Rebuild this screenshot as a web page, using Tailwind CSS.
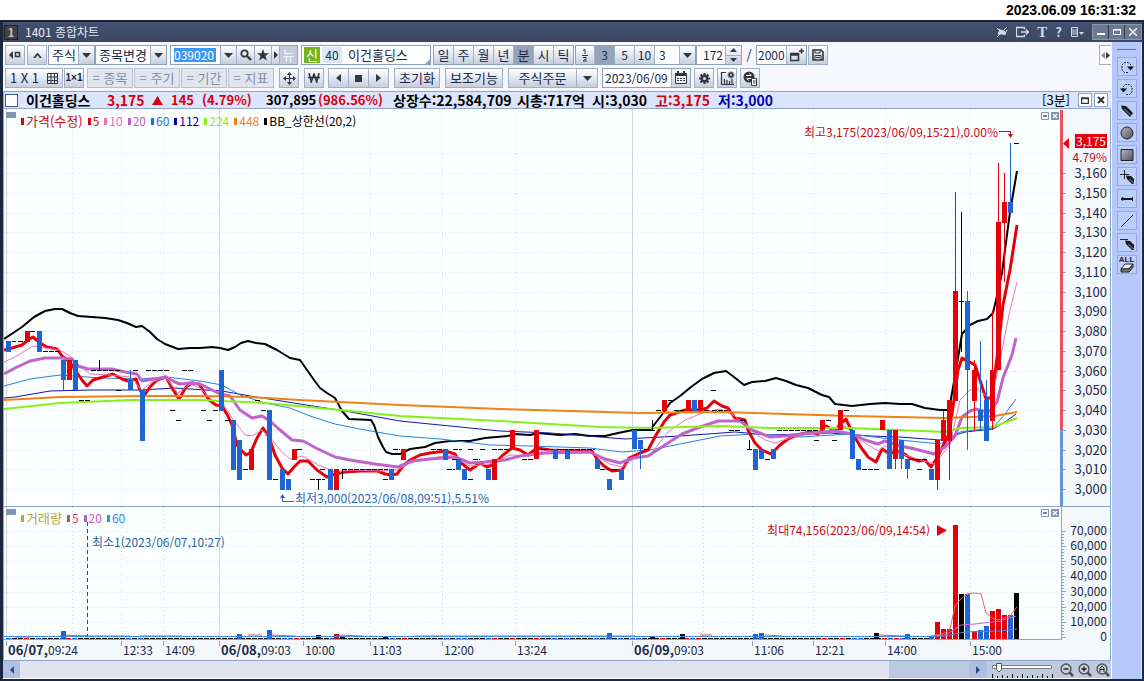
<!DOCTYPE html>
<html lang="ko">
<head>
<meta charset="utf-8">
<title>1401 종합차트</title>
<script src="https://cdn.jsdelivr.net/npm/@tailwindcss/browser@4"></script>
</head>
<body class="min-h-screen bg-white flex flex-col text-[13px] leading-4 text-[#20284a] font-['Noto_Sans_CJK_KR',sans-serif] overflow-x-hidden">
<svg class="hidden">
  <symbol id="down" viewBox="0 0 9 5"><path d="M0 0h9L4.500 5z" fill="#33373f"/></symbol>
  <symbol id="cal" viewBox="0 0 14 14"><path d="M1.500 2.500h11v10h-11z" fill="#eef1f6" stroke="#33373f"/><path d="M1 2h12v3H1zM3 0h2v3H3zM9 0h2v3H9z" fill="#33373f"/><path d="M3 7h2v1H3zm3 0h2v1H6zm3 0h2v1H9zM3 9h2v1H3zm3 0h2v1H6zm3 0h2v1H9z" fill="#33373f"/></symbol>
  <symbol id="gear" viewBox="0 0 14 14"><g stroke="#33373f" stroke-width="2.400"><path d="M7 1v12M1 7h12M2.800 2.800l8.400 8.400M11.200 2.800l-8.400 8.400"/></g><circle cx="7" cy="7" r="4" fill="#33373f"/><circle cx="7" cy="7" r="1.700" fill="#d6dbe5"/></symbol>
  <symbol id="pen" viewBox="0 0 14 14"><path d="M1 1.500l5 .5 7 7-3 4-8-8z" fill="#17181d"/><path d="M4.500 5l6 6" stroke="#9aa0b0"/></symbol>
  <symbol id="minbox" viewBox="0 0 8 8"><path d="M.5.5h7v7h-7z" fill="#fff" stroke="#8095b4"/><path d="M2 3h4v2H2z" fill="#6f86a8"/></symbol>
  <symbol id="xbox" viewBox="0 0 8 8"><path d="M0 0h8v8H0z" fill="#8095b4"/><path d="M2 2l4 4M6 2l-4 4" stroke="#fff" stroke-width="1.300"/></symbol>
</svg>

<header class="h-5 shrink-0 flex justify-end items-center pr-2 text-[14px] font-bold text-black font-['Liberation_Sans',sans-serif]"><time>2023.06.09 16:31:32</time></header>

<div class="flex-1 flex flex-col bg-[#1c2740] pl-[3px] pr-[2px] pb-[2px]">
  <div class="h-[22px] shrink-0 flex items-center bg-linear-to-b from-[#43506f] to-[#3b4762] border-t-2 border-[#1c2333] text-[#e8ecf5]">
    <span class="w-[14px] h-[15px] ml-px bg-[#45413f] border border-[#20222a] text-center text-[11px] leading-[13px] font-bold text-[#c9c4bd]">1</span>
    <h1 class="ml-[7px] grow text-[12px]">1401 종합차트</h1>
    <div class="flex items-center gap-2 text-[#d3d8e4]">
      <button aria-label="고정"><svg class="w-3 h-3" viewBox="0 0 12 12" stroke="currentColor" fill="none"><path d="M1 2l2 2M3 3l3 3M1 11l3-3M11 1L8 4M11 4L8 9"/><path d="M3 4l5 5M2 8l2-4 4 1 2 3z" fill="currentColor"/></svg></button>
      <button aria-label="내보내기"><svg class="w-[13px] h-3" viewBox="0 0 13 12" stroke="currentColor" fill="none" stroke-width="1.300"><path d="M8.500 3.500v-2h-8v9h8v-2M5 6h7M10 3.500L12.500 6 10 8.500"/></svg></button>
      <button class="font-bold font-['Liberation_Serif',serif] text-[15px]" aria-label="글꼴">T</button>
      <button class="font-bold" aria-label="도움말">?</button>
      <button aria-label="메뉴"><svg class="w-[14px] h-3" viewBox="0 0 14 12" fill="none" stroke="currentColor"><path d="M1.500 1.500h6v9h-6zM2 4h5M2 6h5M2 8h5"/><path d="M9 6h5l-2.500 3z" fill="currentColor" stroke="none"/></svg></button>
    </div>
    <div class="flex ml-2 h-4 bg-[#6d7891] border border-[#8d97ab] divide-x divide-[#2f3a53]">
      <button class="w-4 grid place-items-center" aria-label="최소화"><svg class="w-2 h-2" viewBox="0 0 8 8"><path d="M0 5h8v2H0z" fill="#fff"/></svg></button>
      <button class="w-4 grid place-items-center" aria-label="최대화"><svg class="w-2 h-2" viewBox="0 0 8 8"><path d="M.5 1.500h7v5h-7zM0 2h8" fill="none" stroke="#fff"/></svg></button>
      <button class="w-4 grid place-items-center" aria-label="닫기"><svg class="w-2 h-2" viewBox="0 0 8 8"><path d="M0 0l8 8M8 0L0 8" stroke="#fff" stroke-width="1.300"/></svg></button>
    </div>
  </div>

  <div class="flex-1 flex">
    <main class="flex-1 min-w-0 flex flex-col bg-[#f7f8fd] pr-px border-b border-white">
      <div class="flex flex-col gap-[3px] pt-[3px] pb-[3px] pl-[2px] [&_button]:shrink-0 [&_button]:grid [&_button]:place-items-center">
        <div class="flex h-5">
          <div class="flex gap-[2px]">
            <button class="w-5 border border-[#a3afc6] bg-linear-to-b from-white to-[#c6cfdf]" aria-label="접기"><svg class="w-3 h-2" viewBox="0 0 12 8"><path d="M4 0v8L0 4z" fill="#33373f"/><path d="M6.500 1.500h4v4h-4z" fill="none" stroke="#33373f" stroke-width="1.500"/></svg></button>
            <button class="w-5 border border-[#a3afc6] bg-linear-to-b from-white to-[#c6cfdf]" aria-label="위로"><svg class="w-[9px] h-[5px]" viewBox="0 0 9 5"><path d="M1 5l3.500-4L8 5" fill="none" stroke="#33373f" stroke-width="1.800"/></svg></button>
          </div>
          <label class="relative flex ml-px w-[47px] border border-[#8fa0bd] bg-white"><select aria-label="시장" class="appearance-none w-full pl-[3px] outline-none"><option>주식</option></select><span class="absolute right-0 inset-y-0 w-4 grid place-items-center border-l border-[#a3afc6] bg-linear-to-b from-white to-[#c6cfdf] pointer-events-none"><svg class="w-[9px] h-[5px]"><use href="#down"/></svg></span></label>
          <label class="relative flex w-[72px] border border-[#8fa0bd] bg-white"><select aria-label="종목변경" class="appearance-none w-full pl-[3px] outline-none"><option>종목변경</option></select><span class="absolute right-0 inset-y-0 w-4 grid place-items-center border-l border-[#a3afc6] bg-linear-to-b from-white to-[#c6cfdf] pointer-events-none"><svg class="w-[9px] h-[5px]"><use href="#down"/></svg></span></label>
          <div class="flex ml-[3px] border border-[#8fa0bd] bg-white divide-x divide-[#a3afc6]">
            <label class="w-[50px] flex items-center pl-[3px]"><span class="sr-only">종목코드</span><input value="039020" class="w-[42px] h-[14px] bg-[#3c96f4] text-[12px] text-white outline-none"></label>
            <button class="w-4 bg-linear-to-b from-white to-[#c6cfdf]" aria-label="코드 목록"><svg class="w-[9px] h-[5px]"><use href="#down"/></svg></button>
            <button class="w-[18px] bg-linear-to-b from-white to-[#c6cfdf]" aria-label="검색"><svg class="w-3 h-3" viewBox="0 0 12 12"><circle cx="4.500" cy="4.500" r="3.200" fill="none" stroke="#33373f" stroke-width="1.800"/><path d="M7 7l4 4" stroke="#33373f" stroke-width="2.400"/></svg></button>
            <button class="w-[17px] bg-linear-to-b from-white to-[#c6cfdf]" aria-label="관심"><svg class="w-3 h-3" viewBox="0 0 12 12"><path d="M6 0l1.600 4.200H12L8.500 7l1.300 4.600L6 9l-3.800 2.600L3.500 7 0 4.200h4.400z" fill="#33373f"/></svg></button>
            <button class="w-2 bg-linear-to-b from-white to-[#c6cfdf]" aria-label="더보기"><svg class="w-1 h-2" viewBox="0 0 4 8"><path d="M0 0l4 4-4 4z" fill="#33373f"/></svg></button>
            <button class="w-[17px] bg-[#c3cad9] text-white">뉴</button>
          </div>
          <div class="relative flex items-center ml-[3px] w-[130px] border border-[#8fa0bd] bg-white pl-[2px]">
            <span class="w-4 h-4 bg-[#76b41c] text-white text-center">신</span><span class="w-5 h-4 ml-[2px] bg-[#dce8fa] text-center text-[12px]">40</span><span class="ml-[6px]">이건홀딩스</span>
            <svg class="absolute right-0 bottom-0 w-[5px] h-[5px]" viewBox="0 0 5 5"><path d="M5 0v5H0z" fill="#8fa0bd"/></svg>
          </div>
          <div class="flex ml-[2px] w-[141px] border border-[#8fa0bd] divide-x divide-[#a3afc6] bg-linear-to-b from-white to-[#c6cfdf] [&>button]:flex-1">
            <button>일</button><button>주</button><button>월</button><button>년</button><button class="bg-[#98a3ba]">분</button><button>시</button><button>틱</button>
          </div>
          <div class="flex ml-px w-[121px] border border-[#8fa0bd] divide-x divide-[#a3afc6] bg-linear-to-b from-white to-[#c6cfdf] text-[12px]">
            <button class="w-[19px]" aria-label="2분의 1"><svg class="w-2 h-[14px]" viewBox="0 0 8 14" fill="none" stroke="#33373f"><path d="M2 2.500l2-1V6M1 7.500h6M2 9.500h3v1.500l-3 2h4"/></svg></button><button class="w-5 bg-[#98a3ba]">3</button><button class="w-5">5</button><button class="w-5">10</button>
            <input aria-label="분 간격" value="3" class="w-[25px] bg-white pl-1 outline-none min-w-0 flex-1"><button class="w-[15px]" aria-label="간격 목록"><svg class="w-[9px] h-[5px]"><use href="#down"/></svg></button>
          </div>
          <div class="flex w-[46px] border border-[#8fa0bd] bg-white text-[12px]">
            <input aria-label="표시 개수" value="172" class="w-7 min-w-0 flex-1 text-right pr-[2px] outline-none">
            <div class="w-4 flex flex-col border-l border-[#a3afc6] divide-y divide-[#a3afc6] bg-linear-to-b from-white to-[#c6cfdf]"><button class="flex-1" aria-label="증가"><svg class="w-[7px] h-1 rotate-180" viewBox="0 0 9 5"><use href="#down"/></svg></button><button class="flex-1" aria-label="감소"><svg class="w-[7px] h-1" viewBox="0 0 9 5"><use href="#down"/></svg></button></div>
          </div>
          <span class="w-[14px] text-center leading-5">/</span>
          <div class="flex w-[51px] border border-[#8fa0bd] bg-white text-[12px]"><input aria-label="전체 개수" value="2000" class="w-7 min-w-0 flex-1 pl-px outline-none"><button class="w-5 border-l border-[#a3afc6] bg-linear-to-b from-white to-[#c6cfdf]" aria-label="차트 추가"><svg class="w-[14px] h-[14px]" viewBox="0 0 14 14"><path d="M.5 5.500h8v7h-8zM0 7h9M9 3h5M11.500.5v5" fill="none" stroke="#33373f" stroke-width="1.600"/></svg></button></div>
          <button class="ml-px w-5 border border-[#a3afc6] bg-linear-to-b from-white to-[#c6cfdf]" aria-label="저장"><svg class="w-3 h-3" viewBox="0 0 12 12"><path d="M1 1h8l2 2v8H1z" fill="none" stroke="#33373f" stroke-width="1.600"/><path d="M3 1v3h5V1M3 11V6.500h6V11M4 8.500h4" fill="none" stroke="#33373f"/></svg></button>
          <button class="ml-auto w-3 border border-r-0 border-[#a3afc6] bg-white" aria-label="사이드바"><svg class="w-[9px] h-[7px]" viewBox="0 0 9 7"><path d="M4 0v7L0 3.500z" fill="#8a8f99"/><path d="M5 0v7l4-3.500z" fill="#33373f"/></svg></button>
        </div>
        <div class="flex h-5">
          <button class="w-[58px] border border-[#a3afc6] bg-linear-to-b from-white to-[#c6cfdf]"><span class="flex items-center gap-2">1 X 1 <svg class="w-[11px] h-[11px]" viewBox="0 0 11 11"><path d="M.5.5h10v10H.5zM4 0v11M7.500 0v11M0 4h11M0 7.500h11" fill="none" stroke="#33373f"/></svg></span></button>
          <button class="ml-px w-5 border border-[#a3afc6] bg-linear-to-b from-white to-[#c6cfdf] text-[10px] font-bold font-['Liberation_Sans',sans-serif]">1×1</button>
          <div class="flex gap-px ml-[3px] text-[#858ea4] [&>button]:w-[46px] [&>button]:border [&>button]:border-[#b7c0d2] [&>button]:bg-[#e0e5ef]"><button>= 종목</button><button>= 주기</button><button>= 기간</button><button>= 지표</button></div>
          <button class="ml-[5px] w-5 border border-[#a3afc6] bg-linear-to-b from-white to-[#c6cfdf]" aria-label="이동"><svg class="w-[13px] h-[13px]" viewBox="0 0 13 13"><path d="M6.500 1v11M1 6.500h11" stroke="#33373f"/><path d="M6.500 0l2.500 3H4zM6.500 13L4 10h5zM0 6.500L3 4v5zM13 6.500L10 9V4z" fill="#33373f"/></svg></button>
          <button class="ml-[5px] w-5 border border-[#a3afc6] bg-linear-to-b from-white to-[#c6cfdf]" aria-label="원화"><svg class="w-3 h-[10px]" viewBox="0 0 12 10"><path d="M1 0l2.300 9L6 1l2.700 8L11 0M0 4.500h12" fill="none" stroke="#33373f" stroke-width="1.600"/></svg></button>
          <div class="flex ml-1 w-[61px] border border-[#a3afc6] divide-x divide-[#a3afc6] bg-linear-to-b from-white to-[#c6cfdf] [&>button]:flex-1"><button aria-label="이전"><svg class="w-[5px] h-2" viewBox="0 0 5 8"><path d="M5 0v8L0 4z" fill="#33373f"/></svg></button><button aria-label="정지"><svg class="w-[7px] h-[7px]" viewBox="0 0 7 7"><path d="M0 0h7v7H0z" fill="#33373f"/></svg></button><button aria-label="다음"><svg class="w-[5px] h-2" viewBox="0 0 5 8"><path d="M0 0v8l5-4z" fill="#33373f"/></svg></button></div>
          <button class="ml-[5px] w-[46px] border border-[#a3afc6] bg-linear-to-b from-white to-[#c6cfdf]">초기화</button>
          <button class="ml-[5px] w-[58px] border border-[#a3afc6] bg-linear-to-b from-white to-[#c6cfdf]">보조기능</button>
          <div class="flex ml-[5px] w-[90px] border border-[#a3afc6] divide-x divide-[#a3afc6] bg-linear-to-b from-white to-[#c6cfdf]"><button class="flex-1">주식주문</button><button class="w-5" aria-label="주문 목록"><svg class="w-[9px] h-[5px]"><use href="#down"/></svg></button></div>
          <div class="flex ml-1 w-[89px] border border-[#8fa0bd] bg-white text-[12px]"><input aria-label="날짜" value="2023/06/09" class="flex-1 min-w-0 pl-[2px] outline-none"><button class="w-[19px] border-l border-[#a3afc6] bg-linear-to-b from-white to-[#c6cfdf]" aria-label="달력"><svg class="w-[14px] h-[14px]"><use href="#cal"/></svg></button></div>
          <div class="flex gap-[3px] ml-[3px] [&>button]:w-5 [&>button]:border [&>button]:border-[#a3afc6] [&>button]:bg-linear-to-b [&>button]:from-white [&>button]:to-[#c6cfdf]">
            <button aria-label="설정"><svg class="w-[13px] h-[13px]" viewBox="0 0 14 14"><use href="#gear"/></svg></button>
            <button aria-label="차트 설정"><svg class="w-[15px] h-[15px]" viewBox="0 0 15 15"><path d="M6 1.500H1.500v12H14M4.500 13V8M7 13V9M9.500 13v-3M12 13V8" fill="none" stroke="#33373f" stroke-width="1.200"/><svg x="7" y="0" width="8" height="8" viewBox="0 0 14 14"><use href="#gear"/></svg></svg></button>
            <button aria-label="조회"><svg class="w-[15px] h-[15px]" viewBox="0 0 15 15"><circle cx="6" cy="6" r="5.500" fill="#33373f"/><path d="M3 4.500h5l-1.500-2M9 7.500H4l1.500 2" fill="none" stroke="#fff"/><path d="M8.500 7.500h5v7h-5z" fill="#fff" stroke="#33373f"/><path d="M10 10h2.500M10 12h2.500" stroke="#33373f"/></svg></button>
          </div>
        </div>
      </div>

      <section class="h-[18px] shrink-0 flex items-center border-y border-l border-[#8fa5c9] bg-[#dbe6fc] pl-px text-[14px] font-bold text-black whitespace-nowrap">
        <input type="checkbox" aria-label="종목 선택" class="appearance-none w-[13px] h-[13px] border border-[#3d5a94] bg-white">
        <span class="ml-2 w-[81px]">이건홀딩스</span>
        <span class="w-[45px] text-[#d8000c]">3,175</span><span class="w-[19px] text-[#d8000c]"><svg class="w-[11px] h-[9px]" viewBox="0 0 11 9"><path d="M5.500 0L11 9H0z" fill="#d8000c"/></svg></span><span class="w-[31px] text-[13px] text-[#d8000c]">145</span><span class="w-[64px] text-[13px] text-[#d8000c]">(4.79%)</span>
        <span class="w-[52px] text-[13px]">307,895</span><span class="w-[75px] text-[13px] text-[#d8000c]">(986.56%)</span>
        <span class="w-[124px]">상장수:22,584,709</span><span class="w-[75px]">시총:717억</span><span class="w-[63px]">시:3,030</span><span class="w-[63px] text-[#d8000c]">고:3,175</span><span class="text-[#0000b4]">저:3,000</span>
        <span class="ml-auto mr-2 text-[13px] font-normal">[3분]</span>
        <span class="flex gap-[2px] mr-[3px]"><button class="w-[14px] h-[14px] grid place-items-center border border-[#8fa5c9] bg-white" aria-label="최대화"><svg class="w-2 h-[7px]" viewBox="0 0 8 7"><path d="M.5 1.500h7v5h-7zM0 1h8" fill="none" stroke="#33373f" stroke-width="1.500"/></svg></button><button class="w-[14px] h-[14px] grid place-items-center border border-[#8fa5c9] bg-white" aria-label="닫기"><svg class="w-2 h-2" viewBox="0 0 8 8"><path d="M1 1l6 6M7 1L1 7" stroke="#33373f" stroke-width="2"/></svg></button></span>
      </section>

      <section class="relative flex border-l border-[#8fa5c9] bg-[#f4f8fb]" aria-label="가격 차트">
        <svg id="price" class="flex-1 min-w-0 h-auto" viewBox="4 109 1066 397"></svg>
        <ul class="absolute left-[17px] top-1 flex gap-[5px] text-[12px] [&>li]:flex [&>li]:items-center [&>li]:gap-[2px] [&_i]:w-[3px] [&_i]:h-[7px] [&_i]:bg-current">
          <li class="text-[#c80a14] text-[13px]"><i></i>가격(수정)</li><li class="text-[#e00010]"><i></i>5</li><li class="text-[#ec6fb0]"><i></i>10</li><li class="text-[#b85fc6]"><i></i>20</li><li class="text-[#1478d8]"><i></i>60</li><li class="text-[#0000b4]"><i></i>112</li><li class="text-[#86f018]"><i></i>224</li><li class="text-[#f08218]"><i></i>448</li><li class="text-black"><i></i>BB_상한선(20,2)</li>
        </ul>
        <div class="w-[41px] shrink-0 flex flex-col items-end border-r border-[#8fa5c9] pt-[25px] pr-[3px] pb-[9px]">
          <span class="bg-[#e6000c] text-white text-[12px] h-[14px] leading-[14px] px-px">3,175</span>
          <span class="text-[#c80a14] text-[12px] h-[17px] leading-[17px]">4.79%</span>
          <ol id="priceScale" class="flex-1 flex flex-col justify-between text-right"></ol>
        </div>
      </section>

      <section class="relative flex border-l border-t border-[#8fa5c9] bg-[#f4f8fb]" aria-label="거래량 차트">
        <svg id="volume" class="flex-1 min-w-0 h-auto" viewBox="4 507 1066 133"></svg>
        <ul class="absolute left-[17px] top-[3px] flex gap-[5px] text-[12px] [&>li]:flex [&>li]:items-center [&>li]:gap-[2px] [&_i]:w-[3px] [&_i]:h-[7px] [&_i]:bg-current">
          <li class="text-[#b4a83c] text-[13px]"><i></i>거래량</li><li class="text-[#d8485a]"><i></i>5</li><li class="text-[#b85fc6]"><i></i>20</li><li class="text-[#1e96e6]"><i></i>60</li>
        </ul>
        <ol id="volumeScale" class="w-[41px] shrink-0 flex flex-col justify-between text-right text-[12px] leading-2 border-r border-[#8fa5c9] pt-[19px] pr-[3px]"></ol>
      </section>

      <div class="border-x border-b border-[#8fa5c9] bg-[#f4f8fb]"><svg id="times" class="block w-full h-auto" viewBox="4 640 1106 20"></svg></div>

      <div class="flex-1 min-h-[17px] flex bg-[#dfe4ee]">
        <button class="w-[17px] grid place-items-center bg-[#b0c0e2]" aria-label="왼쪽으로"><svg class="w-1 h-2" viewBox="0 0 4 8"><path d="M4 0v8L0 4z" fill="#2b4a86"/></svg></button>
        <div class="flex-1 flex justify-end"><span class="w-[80px] bg-[#bac8e2]"></span></div>
        <button class="w-[18px] grid place-items-center bg-[#aebedf]" aria-label="오른쪽으로"><svg class="w-1 h-2" viewBox="0 0 4 8"><path d="M0 0v8l4-4z" fill="#2b4a86"/></svg></button>
        <div class="w-[124px] flex items-center pl-1 gap-[7px] bg-[#c0cadf]">
          <div class="relative w-[62px] h-full"><input type="range" value="10" aria-label="확대 비율" class="absolute inset-0 w-full h-full opacity-0"><svg class="w-[62px] h-[17px]" viewBox="0 0 62 17"><path d="M1.500 4.500h59v3h-59z" fill="#fff" stroke="#777d89"/><path d="M5.500 2.500h5v6L8 11l-2.500-2.500z" fill="#fff" stroke="#555"/><path d="M1.500 13v4M6.500 15v2M11.500 14v3M16.500 15v2M21.500 13v4M26.500 15v2M31.500 13v4M36.500 15v2M41.500 14v3M46.500 15v2M51.500 13v4M56.500 15v2M61.500 13v4" stroke="#111"/></svg></div>
          <div class="flex gap-1 [&_svg]:w-[14px] [&_svg]:h-[14px]">
            <button aria-label="축소"><svg viewBox="0 0 14 14"><path d="M9 9l4 4" stroke="#4a4d55" stroke-width="2.500"/><circle cx="6" cy="6" r="5" fill="#c9ccd3" stroke="#4a4d55" stroke-width="1.300"/><path d="M3.500 6h5" stroke="#222" stroke-width="1.400"/></svg></button>
            <button aria-label="확대"><svg viewBox="0 0 14 14"><path d="M9 9l4 4" stroke="#4a4d55" stroke-width="2.500"/><circle cx="6" cy="6" r="5" fill="#c9ccd3" stroke="#4a4d55" stroke-width="1.300"/><path d="M3.500 6h5M6 3.500v5" stroke="#222" stroke-width="1.400"/></svg></button>
            <button aria-label="전체"><svg viewBox="0 0 14 14"><path d="M9 9l4 4" stroke="#4a4d55" stroke-width="2.500"/><circle cx="6" cy="6" r="5" fill="#c9ccd3" stroke="#4a4d55" stroke-width="1.300"/><path d="M4 9V5l2-2 2 2v4M4 6.500h4" fill="none" stroke="#222"/></svg></button>
          </div>
        </div>
      </div>
    </main>

    <aside class="w-[30px] shrink-0 flex flex-col items-center gap-[3px] pt-[7px] bg-[#b4c8fa] border-r border-[#d5e0fb] [&>button]:w-5 [&>button]:h-[19px] [&>button]:grid [&>button]:place-items-center [&>button]:border [&>button]:border-[#95abdc] [&>button]:bg-[#bccefa] [&_svg]:w-[14px] [&_svg]:h-[14px]">
      <span class="w-[19px] h-px mb-[4px] bg-[#6079ad]"></span>
      <button aria-label="다시 실행"><svg viewBox="0 0 14 14"><path d="M8 12.500H4.500L2 10V5l2.500-2.500h4L11 5v2" fill="none" stroke="#23252c" stroke-dasharray="2 1"/><path d="M7 6.500h7l-3.500 4z" fill="#17181d"/></svg></button>
      <button aria-label="실행 취소"><svg viewBox="0 0 14 14"><path d="M6 12.500h3.500L12 10V5L9.500 2.500h-4L3 5v2" fill="none" stroke="#23252c" stroke-dasharray="2 1"/><path d="M0 6.500h7l-3.500 4z" fill="#17181d"/></svg></button>
      <button aria-label="펜"><svg><use href="#pen"/></svg></button>
      <button aria-label="원"><svg viewBox="0 0 14 14"><defs><linearGradient id="shade" x2="1" y2="1"><stop stop-color="#b5b8c0"/><stop offset="1" stop-color="#4e5159"/></linearGradient></defs><circle cx="7" cy="7" r="6" fill="url(#shade)" stroke="#23252c"/></svg></button>
      <button aria-label="사각형"><svg viewBox="0 0 14 14"><path d="M1 1.500h12v11H1z" fill="url(#shade)" stroke="#23252c"/></svg></button>
      <button aria-label="십자선"><svg viewBox="0 0 14 14"><path d="M0 4.500h9M4.500 0v9" stroke="#23252c"/><svg x="5" y="4" width="9" height="10" viewBox="0 0 14 14"><use href="#pen"/></svg></svg></button>
      <button aria-label="수평 구간"><svg viewBox="0 0 14 14"><path d="M1 7h12" stroke="#17181d" stroke-width="2"/><path d="M1 7l2-1.500v3zM12.500 5v4" stroke="#17181d" fill="#17181d"/></svg></button>
      <button aria-label="추세선"><svg viewBox="0 0 14 14"><path d="M1 13L13 1" stroke="#23252c"/></svg></button>
      <button aria-label="수평선"><svg viewBox="0 0 14 14"><path d="M0 3.500h8" stroke="#23252c"/><svg x="4" y="3" width="10" height="11" viewBox="0 0 14 14"><use href="#pen"/></svg></svg></button>
      <button class="text-[8px] font-bold leading-[5px] text-[#23252c] font-['Liberation_Sans',sans-serif]" aria-label="모두 지우기"><span>ALL</span><svg class="max-h-[10px]" viewBox="0 0 14 10"><path d="M5 1h8L9 6H1z" fill="#eee" stroke="#23252c"/><path d="M1 6h8l4-5v3L9 9H1z" fill="#777" stroke="#23252c"/></svg></button>
    </aside>
  </div>
</div>

<script>
const RED = '#e6000a', BLUE = '#1e64d2', BLACK = '#000';
const COLORS = { R: RED, B: BLUE, K: BLACK };
const rect = (x, y, w, h, fill) => `<rect x="${x}" y="${y}" width="${w}" height="${h}" fill="${fill}"/>`;
const line = (pts, color, width) => `<polyline points="${pts}" fill="none" stroke="${color}" stroke-width="${width}" stroke-linejoin="round"/>`;
const label = (x, y, text, fill, extra = '') => `<text x="${x}" y="${y}" fill="${fill}" font-size="12" ${extra}>${text}</text>`;

const dottedX = [72, 121, 163, 303, 370, 442, 515, 703, 752, 813, 885, 970];
const dayX = [6, 219, 632];
function grid(top, bottom, rows) {
  let out = rect(4, top, 1057, bottom - top, '#fcffff');
  for (const y of rows) out += `<path d="M4 ${y}.5H1060" stroke="#dfe4ea" stroke-dasharray="1 2"/>`;
  for (const x of dottedX) out += `<path d="M${x}.5 ${top}V${bottom}" stroke="#cfd6de" stroke-dasharray="1 3"/>`;
  for (const x of dayX) out += `<path d="M${x}.5 ${top}V${bottom}" stroke="#d2d8e2"/>`;
  return out;
}

// side, x centre, body top, body bottom, optional wick top and bottom
const candles = [
  ['B',8,341,352],['R',27,331,342],['B',39,331,352],['B',63,360,380,360,390],['R',69,360,380],['B',75,360,390],
  ['B',130,380,390,370,390],['B',142,390,441],['B',221,370,411],['B',233,420,470],['B',239,440,480],['R',251,449,470],
  ['B',269,410,480],['B',282,469,490],['B',288,479,490],['R',294,449,460],['B',330,469,490],['R',336,469,490],
  ['B',391,469,480],['R',403,449,460],['B',445,449,460],['B',458,459,470],['B',464,469,480],['B',488,469,480],
  ['R',494,459,480],['R',512,430,449],['R',536,430,459],['B',555,449,459],['B',567,449,459],['B',597,459,469],
  ['B',609,479,490],['B',621,469,480],['B',634,430,449],['B',640,440,449,440,469],['R',664,400,411],['R',688,400,411],
  ['B',694,400,411],['R',700,400,411],['B',755,449,470],['B',761,449,459],['B',773,449,459],['R',822,420,430],
  ['R',840,410,430],['B',852,430,459],['B',858,459,470],['R',882,420,430],['B',889,430,469],['R',895,430,459,430,469],
  ['B',901,440,459,440,469],['B',907,459,469,459,479],['B',931,469,480],['R',937,440,480,440,490],['R',943,420,441,411,441],
  ['R',949,400,441,400,480],['R',955,291,401,192,401],['B',967,301,370,291,450],['R',974,370,401,360,431],
  ['B',980,410,421,341,431],['B',986,400,441,380,441],['R',992,370,421,310,430],['R',998,222,370,163,370],
  ['R',1004,202,223,173,282],['B',1010,202,213,143,213]
];
// runs of unchanged bars: y, then start and end pairs
const dashes = [
  [341,12,16,18,25],[331,30,36],[351,43,60],[370,91,120,133,139,146,169,182,194],[390,116,121],[400,79,90,255,260],
  [410,170,175,201,206,213,218,261,266],[420,176,181,207,212,225,230],[469,243,248,320,326,342,388,447,455,600,618,862,879,917,922],
  [479,273,278,310,325,383,388,468,473],[449,297,303,393,400,431,443,453,462,468,473,480,485,492,508,538,553,557,595,644,649,747,752],
  [459,452,457,473,480,522,533,765,770,910,928],[430,638,655,729,740,777,818],[400,668,673],[410,656,662,674,684,704,709,712,728,844,849],
  [390,711,716],[420,740,746,826,831],[440,814,819,832,837],[301,959,964],[143,1014,1019]
];
const stems = [[99,360,370],[318,479,490],[342,469,479],[652,420,430],[749,440,449],[961,212,352]];
const ma = {
  orange: '4,400 60,397 140,396 200,396 250,397 300,400 400,405 500,409 640,413 720,412 850,416 945,418 995,416 1017,412',
  green: '4,409 60,403 130,400 200,400 265,403 330,409 400,416 500,421 600,427 650,428 720,426 770,428 850,428 945,432 960,428 993,427 1017,418',
  navy: '4,398 15,397 50,391 90,390 140,390 175,388 222,391 250,396 300,404 345,411 400,421 460,427 500,431 550,433 600,437 625,439 680,436 735,432 770,435 830,433 870,436 900,437 940,440 965,432 993,429 1005,422 1016,414',
  blue: '4,386 30,379 60,375 100,378 140,379 166,377 200,381 222,385 240,395 265,403 290,408 310,416 335,424 365,430 400,436 440,439 490,445 530,446 590,448 622,452 650,450 685,443 720,436 755,434 800,437 850,434 890,439 940,444 960,432 975,430 993,428 1005,414 1016,399',
  purple: '4,374 15,368 30,361 45,358 60,358 72,359 78,366 88,369 112,369 125,372 137,374 142,381 155,379 166,377 175,382 180,384 190,383 200,384 212,390 220,394 230,396 240,410 252,418 262,416 270,421 280,430 292,440 303,441 318,449 335,457 350,460 375,464 398,467 412,461 430,459 455,457 470,463 485,462 505,460 520,456 545,453 590,452 605,459 620,463 633,458 648,456 665,445 682,434 700,427 718,421 740,421 752,430 770,437 785,436 810,433 835,431 852,434 865,440 878,444 885,441 900,446 915,449 934,454 945,447 955,436 962,417 970,411 976,409 982,411 990,411 997,402 1003,378 1012,355 1016,338',
  pink: '4,362 15,357 33,346 45,348 60,350 70,356 80,366 90,374 110,375 130,377 142,390 152,382 165,377 178,393 190,384 200,388 212,400 222,402 232,418 245,435 252,436 262,430 270,437 280,450 290,459 303,456 318,465 335,472 350,470 380,471 397,470 410,463 425,459 450,455 470,466 490,464 510,455 530,456 545,450 590,452 610,464 622,467 635,458 650,455 668,432 685,420 705,412 720,409 735,416 750,430 765,440 775,443 795,436 820,433 845,426 860,440 878,451 885,446 905,455 934,464 950,445 960,400 970,390 978,389 985,395 992,398 1000,360 1010,310 1017,282',
  red: '4,350 12,348 22,345 28,340 33,337 40,343 47,347 57,349 62,356 70,362 75,370 82,380 87,386 93,380 103,377 113,374 122,379 128,381 136,379 140,390 144,396 150,387 157,380 166,377 172,388 179,399 186,387 192,383 199,384 204,392 209,400 216,405 222,406 228,416 232,425 237,445 242,451 246,455 251,452 257,438 263,428 269,437 275,455 282,468 288,474 294,467 300,461 308,461 317,470 327,477 335,474 345,472 360,471 378,471 385,474 391,475 397,474 403,466 410,460 420,455 430,453 445,451 455,454 460,462 470,470 480,463 487,467 494,464 503,455 512,448 520,450 528,455 537,448 550,450 575,451 592,451 597,459 604,466 612,471 622,470 629,458 640,453 648,450 656,435 664,422 670,415 685,410 700,410 707,408 714,401 722,406 728,408 735,418 745,420 748,430 755,443 762,450 771,454 780,445 788,439 797,435 810,432 818,434 826,426 835,431 840,424 846,419 852,432 860,446 868,457 876,462 882,449 890,454 895,451 903,453 910,458 919,461 925,460 931,467 937,458 943,446 949,434 954,400 958,370 962,358 968,361 975,365 980,380 986,399 992,397 998,350 1003,305 1010,270 1017,225',
  band: '4,339 13,333 22,327 34,317 45,311 55,309 62,309 70,313 78,316 92,317 105,318 118,320 127,323 136,327 142,326 150,332 157,339 165,344 178,349 190,348 200,348 212,347 220,348 228,350 235,347 241,343 248,341 256,343 265,344 277,350 290,358 300,360 307,370 314,380 320,388 327,393 335,398 342,411 349,419 371,420 374,425 378,437 383,447 386,452 392,454 400,454 410,449 425,447 435,443 450,441 470,441 485,438 508,436 514,434 530,435 538,433 560,435 575,434 590,436 605,436 618,433 633,430 650,430 661,416 670,403 680,396 691,387 702,379 714,373 726,371 734,377 744,385 752,382 765,381 776,378 786,381 796,385 808,388 822,395 829,397 835,404 852,406 870,404 885,403 900,404 912,404 925,408 940,410 949,410 952,393 956,370 962,334 970,325 978,321 987,319 993,313 996,300 1002,273 1010,212 1017,171'
};

let p = grid(109, 506, Array.from({ length: 18 }, (_, i) => Math.round(489 - i * 19.75)));
p += line(ma.band, '#000', 2) + line(ma.navy, '#1414b4', 1) + line(ma.blue, '#2882dc', 1) + line(ma.red, RED, 3);
p += line(ma.pink, '#e878b8', 1) + line(ma.purple, '#c064cc', 3) + line(ma.green, '#86f018', 2) + line(ma.orange, '#f08218', 2);
for (const [c, x, t, b, wt, wb] of candles) {
  if (wt) p += rect(x, wt, 1, wb - wt, COLORS[c]);
  p += rect(x - 2, t, 5, b - t, COLORS[c]);
}
for (const [y, ...xs] of dashes)
  for (let i = 0; i < xs.length; i += 2) p += `<path d="M${xs[i]} ${y}.5H${xs[i + 1]}" stroke="#000" stroke-dasharray="5 1"/>`;
for (const [x, t, b] of stems) p += rect(x, t, 1, b - t, BLACK);
p += rect(1060, 110, 3, 320, '#e8505a') + rect(1060, 430, 3, 76, '#6496dc');
for (let i = 0; i < 17; i++) p += rect(1063, Math.round(489 - i * 19.75), 3, 1, '#8fa5c9');
p += '<path d="M1069 138v11l-6-5.500z" fill="#e6000a"/>';
p += rect(6, 112, 10, 6, '#8095b4');
p += '<use href="#minbox" x="1041" y="112" width="8" height="8"/><use href="#xbox" x="1051" y="112" width="8" height="8"/>';
p += label(998, 137, '최고3,175(2023/06/09,15:21),0.00%', '#c80a14', 'text-anchor="end"') + '<path d="M999 131.500h11.500v4" fill="none" stroke="#c80a14"/><path d="M1008 134h5l-2.500 4z" fill="#c80a14"/>';
p += label(295, 503, '최저3,000(2023/06/08,09:51),5.51%', '#2864b4') + '<path d="M294 501.500H282.500v-5" fill="none" stroke="#2864b4"/><path d="M280 498h5l-2.500-4z" fill="#2864b4"/>';
document.getElementById('price').innerHTML = p;

const bars = [['B',63,631],['B',239,634],['B',269,630],['K',318,635],['R',336,634],['K',342,637],['K',385,636],['B',609,633],['K',652,636],['K',682,634],
  ['B',755,634],['B',761,633],['K',876,633],['B',907,634],['B',931,636],['R',937,622],['R',943,629],['R',949,629],['R',955,525],['K',961,594],['B',967,594],
  ['R',974,631],['B',980,630],['B',986,626],['R',992,611],['R',998,609],['R',1004,615],['B',1010,615],['K',1016,593]];
let v = grid(507, 640, [531, 546, 561, 577, 592, 607, 622]);
for (let x = 8, i = 0; x < 930; x += 6, i++) {
  const c = candles.find(k => Math.abs(k[1] - x) < 3);
  v += rect(x - 2, 638, 5, 1, c ? COLORS[c[0]] : BLACK);
}
v += line('15,637 30,637', '#d8485a', 1) + line('63,635 88,636', '#e05a64', 1) + line('248,635 262,635', '#e05a64', 1) + line('270,635 296,636', '#e05a64', 1) + line('336,635 364,636', '#e05a64', 1) + line('700,635 712,635', '#e05a64', 1) + line('765,635 782,636', '#e05a64', 1) + line('878,635 905,636', '#e05a64', 1) + line('60,636 130,636', '#7878e6', 1) + line('140,636 182,636', '#7878e6', 1) + line('415,636 635,636', '#7878e6', 1);
for (const [c, x, t] of bars) v += rect(x - 2, t, 5, 639 - t, COLORS[c]);
v += line('4,636.500 930,636.500 945,636 965,632 1000,631 1017,629', '#3c8ce6', 1);
v += line('931,636 945,633 950,629 955,606 961,599 967,594 974,593 981,594 986,613 992,618 998,620 1010,616 1017,607', '#e66464', 1);
v += line('931,636 945,635 955,629 961,625 975,624 1000,621 1016,616', '#c864dc', 1);
v += rect(4, 639, 1058, 1, '#8fa5c9') + rect(1061, 507, 1, 133, '#8fa5c9');
for (let i = 0; i < 36; i++) v += rect(1062, Math.round(637 - i * 3.04), i % 5 ? 2 : 4, 1, '#8fa5c9');
v += '<path d="M87.500 522V636" stroke="#2b4a78" stroke-dasharray="4 3"/>';
v += rect(6, 509, 10, 6, '#8095b4');
v += '<use href="#minbox" x="1041" y="509" width="8" height="8"/><use href="#xbox" x="1051" y="509" width="8" height="8"/>';
v += label(92, 547, '최소1(2023/06/07,10:27)', '#2864a0') + label(930, 535, '최대74,156(2023/06/09,14:54)', '#c80a14', 'text-anchor="end"');
v += '<path d="M937 525v11l10-5.500z" fill="#e6000a"/>';
document.getElementById('volume').innerHTML = v;

const times = [[6,'06/07,','09:24'],[121,'','12:33'],[163,'','14:09'],[219,'06/08,','09:03'],[303,'','10:00'],[370,'','11:03'],[442,'','12:00'],[515,'','13:24'],[632,'06/09,','09:03'],[752,'','11:06'],[813,'','12:21'],[885,'','14:00'],[970,'','15:00']];
document.getElementById('times').innerHTML = times.map(([x, d, t]) => rect(x, 641, 1, 5, '#8fa5c9') + label(x + 2, 655, `<tspan font-weight="bold" font-size="13">${d}</tspan>${t}`, '#20284a')).join('');

document.getElementById('priceScale').innerHTML = Array.from({ length: 17 }, (_, i) => `<li>${(3160 - i * 10).toLocaleString('en-US')}</li>`).join('');
document.getElementById('volumeScale').innerHTML = Array.from({ length: 8 }, (_, i) => `<li>${(70000 - i * 10000).toLocaleString('en-US')}</li>`).join('');
</script>
</body>
</html>
